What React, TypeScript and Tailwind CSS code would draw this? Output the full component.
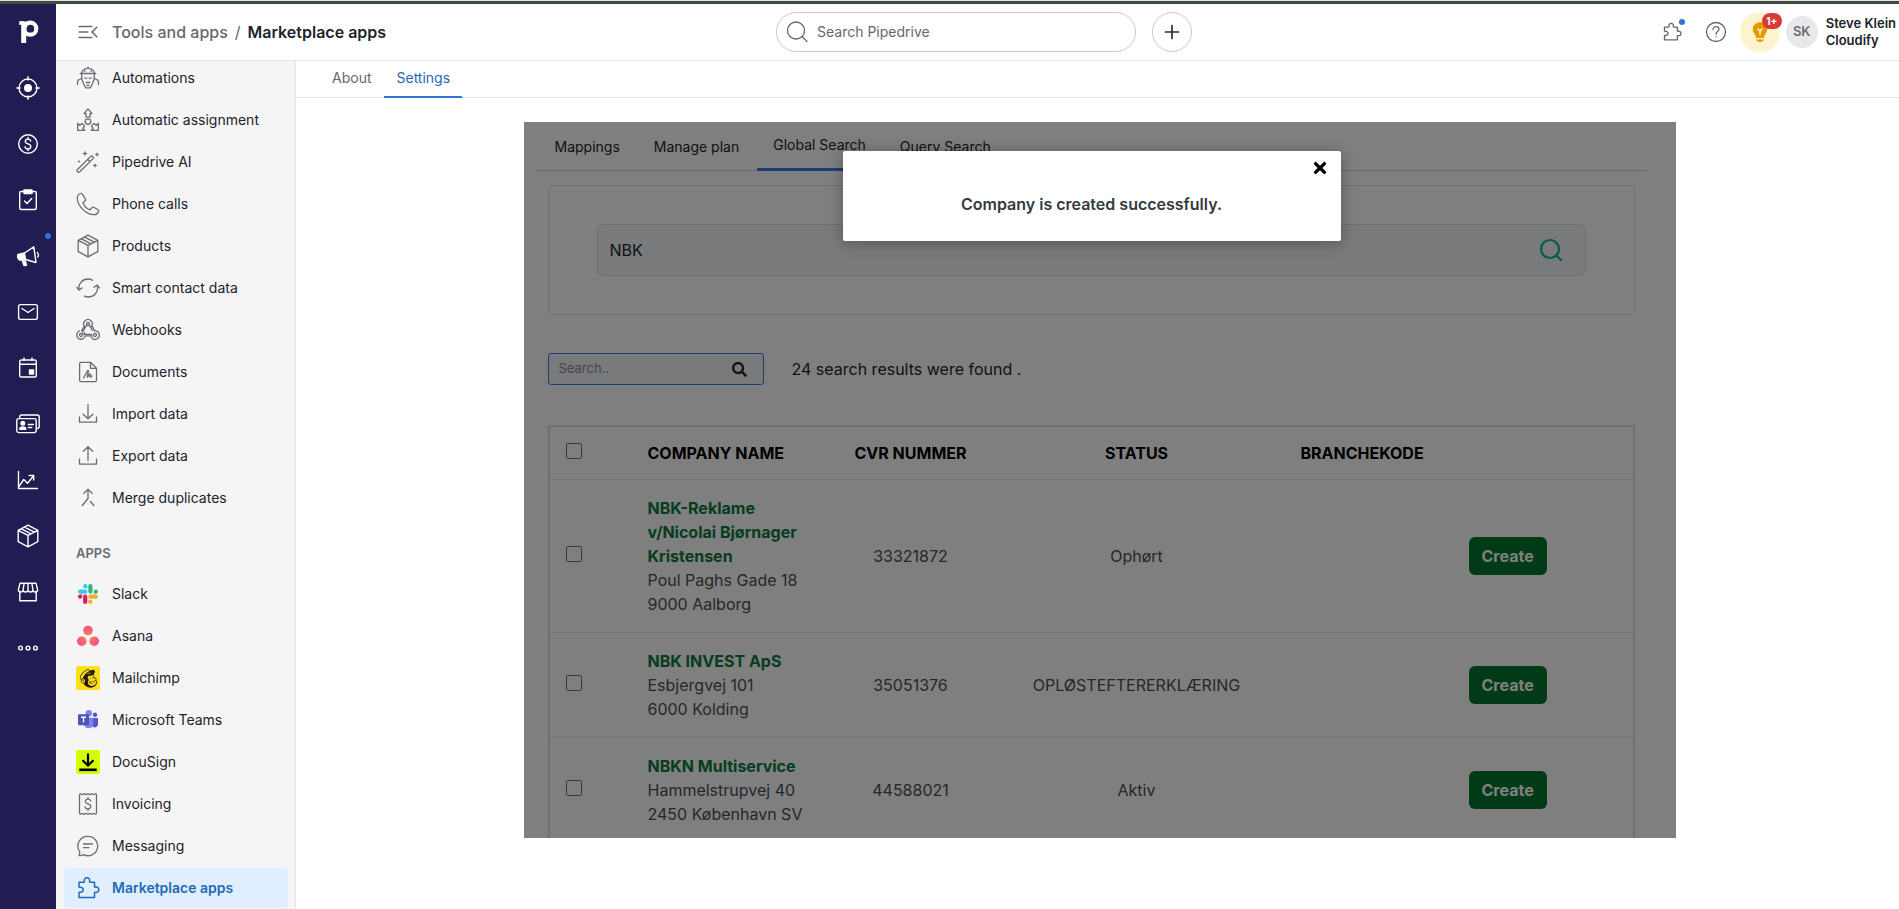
import type { ReactNode } from 'react';
import { FaMailchimp, FaSearch, FaTimes } from 'react-icons/fa';

const Icon = ({ children, width = 1.3, size = 'size-6' }: { children: ReactNode; width?: number; size?: string }) => (
    <svg
        viewBox="0 0 24 24"
        fill="none"
        stroke="currentColor"
        strokeWidth={width}
        strokeLinecap="round"
        strokeLinejoin="round"
        aria-hidden="true"
        className={`${size} shrink-0`}
    >
        {children}
    </svg>
);

const PUZZLE =
    'M3 10.5V6.2h4.7c.6 0 .8-.5.7-1C8 3 9.300 1.700 11 1.700s3 1.300 2.600 3.500c-.1.500.1 1 .7 1h4.200v4.200c0 .6.500.8 1 .7 2-.4 3.300.9 3.300 2.600s-1.300 3-3.300 2.600c-.5-.1-1 .1-1 .7v4.500H3v-4.700c0-.5.4-.8.900-.7 2 .3 3.300-.8 3.300-2.400s-1.300-2.700-3.300-2.400c-.5.1-.9-.2-.9-.7z';
const BOX = 'M12 1.200 21.800 6.300v11.400L12 22.800 2.200 17.700V6.300zM2.200 6.300 12 11.400l9.800-5.100M12 11.400v11.400M8.700 3.200l9.600 5M5.500 4.900l9.600 5';
const DOLLAR = 'M14.700 9c-.3-1.200-1.400-1.900-2.700-1.900-1.500 0-2.700.9-2.700 2.300 0 3.300 5.500 1.700 5.500 5.100 0 1.400-1.200 2.400-2.800 2.400s-2.700-.8-2.900-2.100M12 5.400v1.700M12 16.900v1.700';
const SPARKS = 'M9 .5l.8 2.200 2.200.8-2.200.8L9 6.500l-.8-2.200L6 3.500l2.200-.8zM21 2l.7 1.800 1.800.7-1.800.7L21 7l-.7-1.800-1.800-.7 1.800-.7zM3 9.800l.5 1.200 1.200.5-1.200.5L3 13.200 2.500 12l-1.200-.5 1.200-.5zM19 13l.7 1.800 1.800.7-1.800.7L19 18l-.7-1.800-1.800-.7 1.800-.7z';

const railItems = [
    {
        label: 'Leads',
        icon: (
            <>
                <circle cx="12" cy="12" r="9" />
                <circle cx="12" cy="12" r="4" fill="currentColor" stroke="none" />
                <path d="M12 .8V4M12 20v3.200M.8 12H4M20 12h3.200" />
            </>
        ),
    },
    {
        label: 'Deals',
        icon: (
            <>
                <circle cx="12" cy="12" r="9.300" />
                <path d={DOLLAR} />
            </>
        ),
    },
    {
        label: 'Activities',
        icon: (
            <>
                <rect x="3.700" y="3.500" width="16.600" height="18" rx="1.500" />
                <path d="M8 2h8v3.500H8z" fill="currentColor" />
                <path d="m8.500 13 2.500 2.500 4.700-5" />
            </>
        ),
    },
    {
        label: 'Campaigns',
        dot: true,
        icon: (
            <>
                <path d="M2 10.500 8.500 9l1 6.500-6 .5C1.500 15 1.300 12 2 10.500zM6.500 17h2.800l1.200 4.200-2.500.3z" fill="currentColor" />
                <path d="M8.500 9 17.800 2.800l2.200 15.700-10.500-3M21.300 8.500c1.300 1 1.500 3.500.5 4.500" />
            </>
        ),
    },
    {
        label: 'Mail',
        icon: (
            <>
                <rect x="2.600" y="4.600" width="18.800" height="14.800" rx="1.800" />
                <path d="m6 8.500 6 4 6-4" />
            </>
        ),
    },
    {
        label: 'Calendar',
        icon: (
            <>
                <rect x="3.700" y="4" width="16.600" height="17" rx="1.800" />
                <path d="M4 8.300h16M8 2V4.500M16 2V4.500" />
                <path d="M13.500 14h4v4h-4z" fill="currentColor" />
            </>
        ),
    },
    {
        label: 'Contacts',
        icon: (
            <>
                <rect x=".8" y="6.600" width="19.400" height="14" rx="2" />
                <path d="M3.800 6.300V4.800c0-1 .8-1.800 1.800-1.800h15.600c1.100 0 2 .9 2 2v9.500c0 1.300-.8 2-2.200 2" />
                <circle cx="6.800" cy="11.300" r="1.800" fill="currentColor" />
                <path d="M3.800 17.300c0-3 6-3 6 0z" fill="currentColor" />
                <path d="M12.300 12.500h5M12.300 15.500h3.400" />
            </>
        ),
    },
    {
        label: 'Insights',
        icon: <path d="M2.500 3.500v17h19M3 18.500l4.700-7 3.800 3.800 5.800-7M13.200 7.500h4.500V12" />,
    },
    { label: 'Products', icon: <path d={BOX} /> },
    {
        label: 'Marketplace',
        icon: (
            <>
                <path d="M4 3.300h16l1.600 6.200c0 1.600-1 2.500-2.300 2.500s-2.400-.9-2.400-2.300c0 1.400-1.100 2.300-2.400 2.300S12 11.100 12 9.700c0 1.400-1.200 2.300-2.500 2.300s-2.400-.9-2.400-2.300C7.100 11.100 6 12 4.700 12s-2.300-.9-2.300-2.500zM7.100 9.700l1-6.400M12 9.700V3.300M16.900 9.700l-1-6.400" />
                <path d="M3.800 12v8.800h16.400V12" />
            </>
        ),
    },
    {
        label: 'More',
        icon: (
            <>
                <circle cx="4.500" cy="12" r="1.900" />
                <circle cx="12" cy="12" r="1.900" />
                <circle cx="19.500" cy="12" r="1.900" />
            </>
        ),
    },
];

const toolItems = [
    {
        label: 'Automations',
        icon: (
            <>
                <path d="M12 1v1.200M5.500 7.300C6.200 4 8.800 2.300 12 2.300s5.800 1.700 6.500 5M4.300 7.500h15.400M5.600 7.800c-.2 4 .6 7.200 1.800 9.700l2.200 4.300h4.800l2.200-4.300c1.200-2.500 2-5.700 1.800-9.700M5.500 12.500 2.700 14M18.500 12.500l2.800 1.500" />
                <path d="M2.200 14c-.9 1.500-1 3-.6 4.500M21.800 14c.9 1.500 1 3 .6 4.500M8.800 11.800l2 .7M15.200 11.800l-2 .7M10.300 16.500h3.400M10.800 19.300h2.400" />
                <path d="M8.800 4.700v.8M15.200 4.700v.8" />
            </>
        ),
    },
    {
        label: 'Automatic assignment',
        icon: (
            <>
                <path d="M12 .9 16 5.600h-2v3.300h-4V5.600H8zM1.700 15.300v7h7l-2-2.100 2-2.100-2.800-2.700-2.200 2zM22.300 15.300v7h-7l2-2.100-2-2.100 2.800-2.700 2.200 2z" />
                <circle cx="12" cy="13.600" r="2.800" />
            </>
        ),
    },
    {
        label: 'Pipedrive AI',
        icon: (
            <>
                <path d="M3.800 21.800 16.800 8.900a1.600 1.600 0 0 0-2.300-2.300L1.500 19.500a1.600 1.600 0 0 0 2.300 2.300zM11.700 9.300l2.400 2.400" />
                <path d={SPARKS} fill="currentColor" stroke="none" />
            </>
        ),
    },
    {
        label: 'Phone calls',
        icon: (
            <path d="M4.800 1.500C2.800 2.100 1.300 3.800 1.300 6.100 1.300 14 10 22.700 18 22.700c2.300 0 4-1.500 4.600-3.500.2-.6-.1-1.200-.6-1.500l-4.300-2.400c-.6-.3-1.200-.2-1.700.3l-1.600 1.900c-.3.300-.7.400-1.100.2-2.600-1.200-5-3.600-6.200-6.200-.2-.4-.1-.8.200-1.100l1.900-1.600c.5-.5.6-1.100.3-1.700L6.300 2.100c-.3-.5-.9-.8-1.500-.6z" />
        ),
    },
    { label: 'Products', icon: <path d={BOX} /> },
    {
        label: 'Smart contact data',
        icon: <path d="M2.900 13.500C2 7.800 6.500 3 12 3c1.700 0 3.300.4 4.600 1.200M.8 11.500l2.300 2.600 2.800-2.200M21.200 9.500C22.800 15.500 18.500 21 12 21c-1.300 0-2.500-.3-3.600-.8M18 11.300l3.100-2.400 2.400 2.900" />,
    },
    {
        label: 'Webhooks',
        icon: (
            <>
                <circle cx="12" cy="6" r="1.500" />
                <circle cx="5" cy="17" r="1.500" />
                <circle cx="19" cy="17" r="1.500" />
                <path d="M8.600 8.500a4.300 4.300 0 1 1 6.800 0M15.800 7.900l3 4.900M13.200 7l3.300 5.500M10.800 7l-4.300 7.200M8.300 8.400l-2.700 4.300" />
                <path d="M3.500 12.900a4.300 4.300 0 1 0 5.700 5h7M6.500 16.400h9M19 12.800a4.300 4.300 0 1 1-3.700 6.400M9 16.400a4.200 4.200 0 0 0-.8-2" />
            </>
        ),
    },
    {
        label: 'Documents',
        icon: (
            <>
                <path d="M5 2.300h9.500l6 6v12c0 .8-.6 1.400-1.400 1.400H5c-.8 0-1.400-.6-1.400-1.400V3.700c0-.8.6-1.400 1.400-1.400zM14.500 2.500v5.800h5.800" />
                <path d="M7.500 18 11.300 11c.5-1 1.300-.7 1.100.3l-1.200 5.200c-.1.700.4.800.8.200l1.500-2.500c.4-.6 1-.4.900.3l-.3 2c0 .7.5.8 1 .3l.8-1" />
            </>
        ),
    },
    { label: 'Import data', icon: <path d="M12 2.700v13.800M7 12.200l5 4.600 5-4.600M3.500 14.800v5.400h17v-5.400" /> },
    { label: 'Export data', icon: <path d="M12 16.700V2.900M7.300 7.200 12 2.600l4.700 4.600M3.500 14.800v5.400h17v-5.400" /> },
    { label: 'Merge duplicates', icon: <path d="M12 4v8.500L6.300 19.500M8 7.300l4-4 4 4M14.500 15.500l3.300 4" /> },
];

const SlackLogo = () => (
    <svg viewBox="0 0 24 24" className="size-6 shrink-0" aria-hidden="true">
        <path d="M9.200 2a2.100 2.100 0 1 0 0 4.200h2.100V4.100A2.100 2.100 0 0 0 9.200 2zM9.200 7.500H4.100a2.100 2.100 0 0 0 0 4.200h5.100a2.100 2.100 0 0 0 0-4.200z" fill="#36C5F0" />
        <path d="M22 9.600a2.100 2.100 0 1 0-4.200 0v2.100h2.100A2.100 2.100 0 0 0 22 9.600zM16.500 9.600V4.100a2.100 2.100 0 0 0-4.200 0v5.500a2.100 2.100 0 0 0 4.200 0z" fill="#2EB67D" />
        <path d="M14.400 22a2.100 2.100 0 1 0 0-4.200h-2.100v2.100c0 1.200.9 2.100 2.100 2.100zM14.400 16.800h5.500a2.100 2.100 0 0 0 0-4.200h-5.500a2.100 2.100 0 0 0 0 4.200z" fill="#ECB22E" />
        <path d="M2 14.700a2.100 2.100 0 1 0 4.200 0v-2.100H4.100A2.100 2.100 0 0 0 2 14.700zM7.100 14.700v5.200a2.100 2.100 0 0 0 4.200 0v-5.200a2.100 2.100 0 0 0-4.200 0z" fill="#E01E5A" />
    </svg>
);

const AsanaLogo = () => (
    <svg viewBox="0 0 24 24" className="size-6 shrink-0" aria-hidden="true">
        <defs>
            <radialGradient id="asana" gradientUnits="userSpaceOnUse" cx="12" cy="13" r="11">
                <stop offset="0" stopColor="#FA8460" />
                <stop offset=".6" stopColor="#F9636E" />
                <stop offset="1" stopColor="#F55676" />
            </radialGradient>
        </defs>
        <g fill="url(#asana)">
            <circle cx="12" cy="6.500" r="4.800" />
            <circle cx="5.800" cy="17.200" r="4.800" />
            <circle cx="18.200" cy="17.200" r="4.800" />
        </g>
    </svg>
);

const TeamsLogo = () => (
    <svg viewBox="0 0 24 24" className="size-6 shrink-0" aria-hidden="true">
        <circle cx="19" cy="6.800" r="2.200" fill="#5059C9" />
        <path d="M16 10h6v6.200a3.300 3.300 0 0 1-6 1.800z" fill="#5059C9" />
        <circle cx="12.800" cy="5.300" r="3.200" fill="#7B83EB" />
        <path d="M8 9.800h9.300v6.500a4.700 4.700 0 0 1-9.300 0z" fill="#7B83EB" />
        <rect x="2" y="6.200" width="11" height="11" rx="1" fill="#4B53BC" />
        <path d="M5 9.300h5M7.500 9.300v5.300" stroke="#fff" strokeWidth="1.400" />
    </svg>
);

const appItems = [
    { label: 'Slack', logo: <SlackLogo /> },
    { label: 'Asana', logo: <AsanaLogo /> },
    {
        label: 'Mailchimp',
        logo: (
            <span className="flex size-6 shrink-0 items-center justify-center rounded-xs bg-[#ffe01b] text-[#241c15]">
                <FaMailchimp size={21} />
            </span>
        ),
    },
    { label: 'Microsoft Teams', logo: <TeamsLogo /> },
    {
        label: 'DocuSign',
        logo: (
            <span className="flex size-6 shrink-0 rounded-xs bg-[#d5ff00] text-black">
                <svg viewBox="0 0 24 24" fill="none" stroke="currentColor" className="size-6" aria-hidden="true">
                    <path d="M12 3.500V15M6.500 10.200 12 15.500l5.500-5.300" strokeWidth="2.200" />
                    <path d="M3.300 19.800h17.400" strokeWidth="2.600" />
                </svg>
            </span>
        ),
    },
    {
        label: 'Invoicing',
        logo: (
            <Icon>
                <path d="M3.500 3.500c0-1 .5-1.800 1-1.800.8 0 .8 1 1.700 1s.9-1 1.900-1 1 1 1.900 1 .9-1 2-1 1 1 1.900 1 1-1 1.900-1 1 1 1.900 1 1-1 1.700-1c.6 0 1.100.7 1.100 1.800v17c0 1.100-.5 1.800-1.100 1.800-.7 0-.8-1-1.700-1s-1 1-1.900 1-1-1-1.900-1-.9 1-1.900 1-1.100-1-2-1-1 1-1.900 1-1-1-1.900-1-.9 1-1.700 1c-.5 0-1-.7-1-1.800z" />
                <path d={DOLLAR} />
            </Icon>
        ),
    },
    {
        label: 'Messaging',
        logo: (
            <Icon>
                <path d="M12 2.300a9.700 9.700 0 1 1-4.500 18.300c-1.300.8-2.800 1.200-4.500 1 .6-1.300.8-2.600.7-4A9.700 9.700 0 0 1 12 2.300zM7.500 10h9M7.500 13.700h5.500" />
            </Icon>
        ),
    },
    {
        label: 'Marketplace apps',
        active: true,
        logo: (
            <Icon width={1.5}>
                <path d={PUZZLE} />
            </Icon>
        ),
    },
];

const companies = [
    { name: 'NBK-Reklame v/Nicolai Bjørnager Kristensen', street: 'Poul Paghs Gade 18', city: '9000 Aalborg', cvr: '33321872', status: 'Ophørt' },
    { name: 'NBK INVEST ApS', street: 'Esbjergvej 101', city: '6000 Kolding', cvr: '35051376', status: 'OPLØSTEFTERERKLÆRING' },
    { name: 'NBKN Multiservice', street: 'Hammelstrupvej 40', city: '2450 København SV', cvr: '44588021', status: 'Aktiv' },
];

const Rail = () => (
    <nav aria-label="Main" className="flex w-14 shrink-0 flex-col bg-[#211c51] text-white">
        <a href="#home" aria-label="Home" className="flex h-14 items-center justify-center">
            <svg viewBox="0 0 24 24" fill="none" stroke="currentColor" className="size-6" aria-hidden="true">
                <circle cx="14.300" cy="8.700" r="6" strokeWidth="4.200" />
                <path d="M7.700 1.500v21.500" strokeWidth="5" />
                <path d="M3.200 3h5" strokeWidth="3.600" />
            </svg>
        </a>
        {railItems.map((item) => (
            <a key={item.label} href="#nav" aria-label={item.label} className="relative flex h-14 items-center justify-center">
                <Icon width={1.4}>{item.icon}</Icon>
                {item.dot && <span className="absolute top-[5px] right-[5px] size-1.5 rounded-full bg-[#2f74d6]" />}
            </a>
        ))}
    </nav>
);

const Header = () => (
    <header className="flex h-[57px] shrink-0 items-center border-b border-[#e4e5e7] bg-white pr-[3px] pl-4">
        <div className="flex flex-1 items-center gap-2">
            <button type="button" aria-label="Collapse menu" className="flex w-8 justify-center text-[#6b6d75]">
                <Icon width={1.6}>
                    <path d="M3.200 6.500h12.600M3.200 12h8.600M3.200 17.500h12.600M20.800 7.300 16 12l4.800 4.700" />
                </Icon>
            </button>
            <div className="flex gap-[7px] text-base font-medium whitespace-nowrap text-[#66686f]">
                <a href="#tools">Tools and apps</a>
                <span className="font-normal">/</span>
                <h1 className="font-semibold text-[#21232c]">Marketplace apps</h1>
            </div>
        </div>
        <div className="flex items-center gap-4">
            <label className="flex h-10 w-[360px] items-center gap-2 rounded-full border border-[#c9cacd] pl-2 text-[#65686f]">
                <Icon>
                    <circle cx="11" cy="10.500" r="8.500" />
                    <path d="m17 16.500 5 5" />
                </Icon>
                <input
                    type="text"
                    aria-label="Search Pipedrive"
                    placeholder="Search Pipedrive"
                    className="min-w-0 flex-1 bg-transparent text-sm outline-none placeholder:text-[#65686f]"
                />
            </label>
            <button type="button" aria-label="Add" className="flex size-10 items-center justify-center rounded-full border border-[#c9cacd] text-[#2b2d35]">
                <Icon width={1.7}>
                    <path d="M12 5.500v13M5.500 12h13" />
                </Icon>
            </button>
        </div>
        <div className="flex flex-1 items-center justify-end gap-1 text-[#65686f]">
            <button type="button" aria-label="Apps" className="relative flex size-10 items-center justify-center">
                <Icon size="size-5" width={1.6}>
                    <path d={PUZZLE} />
                </Icon>
                <span className="absolute top-[7px] right-[7px] size-1.5 rounded-full bg-[#2f74d6]" />
            </button>
            <button type="button" aria-label="Help" className="flex size-10 items-center justify-center">
                <Icon>
                    <circle cx="12" cy="12" r="9.500" />
                    <path d="M9 9.500c0-1.800 1.300-2.900 3-2.900s3 1.100 3 2.700c0 2.200-3 2.400-3 4.900M12 16.800v.3" />
                </Icon>
            </button>
            <button type="button" aria-label="Tips" className="relative flex size-10 items-center justify-center rounded-full bg-[#fff3cf]">
                <svg viewBox="0 0 24 24" className="size-6" aria-hidden="true">
                    <path d="M12 2.300a7 7 0 0 0-7.200 7c0 2.600 1.300 4.200 2.400 5.700.6.900.9 1.700.9 3h7.800c0-1.300.3-2.100.9-3 1.100-1.500 2.400-3.100 2.400-5.700a7 7 0 0 0-7.200-7zM8.300 19.500h7.400c0 1.400-1.300 2.300-3.700 2.300s-3.700-.9-3.700-2.300z" fill="#e69a00" />
                    <path d="M9.700 8.500 12 11.300l2.300-2.800M12 11.300v4" stroke="#fff3cf" strokeWidth="1.500" fill="none" />
                </svg>
                <span className="absolute top-px -right-0.5 flex h-4 w-5 items-center justify-center rounded-full bg-[#d83a38] text-[10px] font-bold text-white">1+</span>
            </button>
            <span className="ml-0.5 flex size-8 items-center justify-center rounded-full bg-[#e8e8ea] text-[13px] font-semibold text-[#6b6d75]">SK</span>
            <p className="ml-1 text-[13px] leading-[17px] font-semibold whitespace-nowrap text-[#21232c]">
                Steve Klein
                <br />
                Cloudify
            </p>
        </div>
    </header>
);

const Sidebar = () => (
    <aside className="flex w-60 shrink-0 flex-col justify-end overflow-hidden border-r border-[#e4e5e7] bg-[#f5f5f6] pr-[7px] pb-px pl-2 text-sm text-[#21232c]">
        <ul className="flex flex-col gap-0.5">
            {toolItems.map((item) => (
                <li key={item.label}>
                    <a href="#tool" className="flex h-10 items-center gap-3 px-3">
                        <span className="text-[#6a6c73]">
                            <Icon>{item.icon}</Icon>
                        </span>
                        {item.label}
                    </a>
                </li>
            ))}
        </ul>
        <h2 className="px-3 pt-[26px] pb-3 text-[13px] leading-[18px] font-semibold text-[#6a6c73]">APPS</h2>
        <ul className="flex flex-col gap-0.5">
            {appItems.map((item) => (
                <li key={item.label}>
                    <a
                        href="#app"
                        className={`flex h-10 items-center gap-3 rounded px-3 ${item.active ? 'bg-[#e1eeff] font-semibold text-[#1f6ab8]' : ''}`}
                    >
                        <span className={item.active ? '' : 'text-[#6a6c73]'}>{item.logo}</span>
                        {item.label}
                    </a>
                </li>
            ))}
        </ul>
    </aside>
);

const ResultsTable = () => (
    <table className="w-full table-fixed border-2 border-b-0 border-[#d5e2e3] text-base text-[#495057]">
        <colgroup>
            <col className="w-[83px]" />
            <col className="w-[200px]" />
            <col className="w-[158px]" />
            <col className="w-[294px]" />
            <col className="w-[157px]" />
            <col />
        </colgroup>
        <thead>
            <tr className="h-[53px] border-b border-[#eaedf0] text-black">
                <th className="pl-4 text-left">
                    <input type="checkbox" aria-label="Select all" className="mb-1.5 size-4 appearance-none rounded-xs border border-[#767676] align-middle" />
                </th>
                <th className="px-4 text-left font-bold">COMPANY NAME</th>
                <th className="font-bold">CVR NUMMER</th>
                <th className="font-bold">STATUS</th>
                <th className="font-bold">BRANCHEKODE</th>
                <th aria-label="Actions" />
            </tr>
        </thead>
        <tbody>
            {companies.map((company) => (
                <tr key={company.cvr} className="border-b border-[#eaedf0]">
                    <td className="pl-4">
                        <input
                            type="checkbox"
                            aria-label={`Select ${company.name}`}
                            className="mb-1.5 size-4 appearance-none rounded-xs border border-[#767676] align-middle"
                        />
                    </td>
                    <td className="p-4">
                        <a href="#company" className="font-bold text-[#087a3c]">
                            {company.name}
                        </a>
                        <p>{company.street}</p>
                        <p>{company.city}</p>
                    </td>
                    <td className="text-center">{company.cvr}</td>
                    <td className="text-center">{company.status}</td>
                    <td />
                    <td className="pl-7">
                        <button type="button" className="h-[38px] rounded-md bg-[#00752e] px-[13px] font-bold text-white">
                            Create
                        </button>
                    </td>
                </tr>
            ))}
        </tbody>
    </table>
);

const AppPanel = () => (
    <section className="relative mx-auto mb-[71px] min-h-0 w-full max-w-[1152px] flex-1 overflow-hidden bg-white">
        <div className="pr-[17px]">
            <nav className="mx-3 flex h-[49px] items-end gap-0.5 border-b border-[#d0d4dd] pl-[3px] text-sm text-[#212529]">
                <a href="#mappings" className="px-4 pb-[13px]">Mappings</a>
                <a href="#plan" className="px-4 pb-[13px]">Manage plan</a>
                <a href="#global" className="-mb-px border-b-3 border-[#3b7de0] px-4 pb-[13px]">Global Search</a>
                <a href="#query" className="px-4 pb-[13px]">Query Search</a>
            </nav>
            <div className="mx-6 mt-3.5 rounded-md border border-[#d8dee3] px-12 py-[38px]">
                <div className="flex h-[52px] items-center rounded-md border border-[#d8e2e4] bg-[#f0f5f7] pr-[22px] pl-3 text-[#0ab39c]">
                    <input type="text" aria-label="Company search" defaultValue="NBK" className="min-w-0 flex-1 bg-transparent text-base text-[#212529] outline-none" />
                    <button type="button" aria-label="Search">
                        <Icon width={2.2}>
                            <circle cx="11" cy="11" r="9" />
                            <path d="m17.500 17.500 4.500 4.500" />
                        </Icon>
                    </button>
                </div>
            </div>
            <div className="mx-6 mt-[38px] flex items-center gap-7">
                <label className="flex h-8 w-[216px] items-center rounded-[3px] border border-[#3b7de0] bg-[#f0f5f7] pr-4 pl-2.5 text-[#212529]">
                    <input
                        type="text"
                        aria-label="Filter results"
                        placeholder="Search.."
                        className="min-w-0 flex-1 bg-transparent text-[13px] outline-none placeholder:text-[#878a99]"
                    />
                    <FaSearch size={15} />
                </label>
                <p className="text-base text-[#212529]">24 search results were found .</p>
            </div>
            <div className="mx-6 mt-10">
                <ResultsTable />
            </div>
        </div>

        <div className="absolute inset-0 flex items-start justify-center bg-black/50 pt-[29px] pr-4">
            <div role="dialog" aria-label="Notification" className="relative h-[90px] w-[498px] rounded-xs bg-white pt-[41px] text-center shadow-[0_2px_16px_rgba(0,0,0,0.3)]">
                <p className="text-base font-semibold text-[#343a40]">Company is created successfully.</p>
                <button type="button" aria-label="Close" className="absolute top-2 right-3 text-black">
                    <FaTimes size={18} />
                </button>
            </div>
        </div>
    </section>
);

export default function App() {
    return (
        <div className="flex h-screen flex-col overflow-hidden bg-white font-[Inter,'Liberation_Sans',sans-serif]">
            <div className="h-1 shrink-0 border-t border-[#dde8df] bg-[#424944]" />
            <div className="flex min-h-0 flex-1">
                <Rail />
                <div className="flex min-w-0 flex-1 flex-col">
                    <Header />
                    <div className="flex min-h-0 flex-1">
                        <Sidebar />
                        <main className="flex min-w-0 flex-1 flex-col">
                            <nav className="mb-6 flex h-[37px] shrink-0 items-stretch gap-px border-b border-[#e4e5e7] pl-6 text-sm text-[#65686f]">
                                <a href="#about" className="px-3 pt-[7px]">About</a>
                                <a href="#settings" className="-mb-px border-b-2 border-[#2f74d6] px-3 pt-[7px] text-[#1f6ab8]">Settings</a>
                            </nav>
                            <div className="flex min-h-0 flex-1 flex-col pl-1">
                                <AppPanel />
                            </div>
                        </main>
                    </div>
                </div>
            </div>
        </div>
    );
}
